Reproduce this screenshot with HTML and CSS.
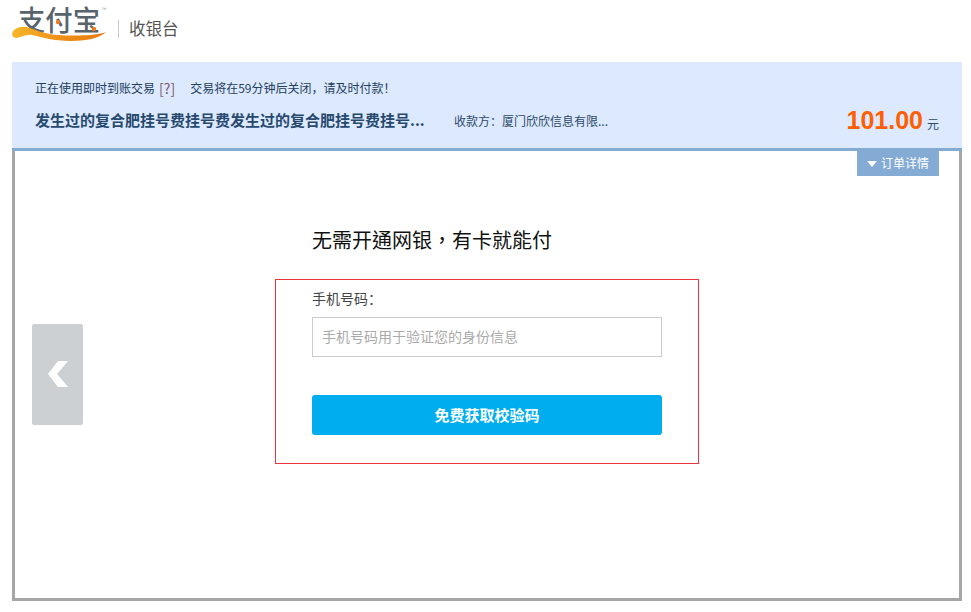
FILE: index.html
```html
<!DOCTYPE html>
<html lang="zh-CN">
<head>
<meta charset="utf-8">
<title>支付宝 收银台</title>
<link rel="stylesheet" href="styles.css">
</head>
<body>
<header class="top">
  <svg class="logo" width="98" height="36" viewBox="0 0 98 36" aria-label="支付宝">
    <defs>
      <linearGradient id="swoosh" x1="0" x2="1" y1="0" y2="0">
        <stop offset="0" stop-color="#f6b62a"/>
        <stop offset="0.45" stop-color="#f0941a"/>
        <stop offset="1" stop-color="#e9770c"/>
      </linearGradient>
    </defs>
    <text class="logo-text" x="7" y="26" textLength="82" lengthAdjust="spacingAndGlyphs">支付宝</text>
    <text class="logo-tm" x="90.500" y="6">™</text>
    <path class="logo-swoosh" fill="url(#swoosh)" d="M1 29C2 24 8 21 15 22C25 24 31 29 47 30C63 31 84 31 95 27C90 32 78 36 60 36C42 36 30 32 21 30C16 28.500 10 32 5 33C3 33 1 31 1 29Z"/>
    <circle class="logo-dot" cx="47" cy="17" r="2.200"/>
    <circle class="logo-dot" cx="83" cy="24" r="2.200"/>
  </svg>
  <span class="divider"></span>
  <span class="cashier">收银台</span>
</header>
<section class="banner">
  <div class="notice">
    <span>正在使用即时到账交易</span><span class="help">[?]</span><span class="timer">交易将在59分钟后关闭，请及时付款！</span>
  </div>
  <div class="order">
    <strong class="subject">发生过的复合肥挂号费挂号费发生过的复合肥挂号费挂号...</strong>
    <span class="payee">收款方：厦门欣欣信息有限...</span>
    <span class="amount"><b>101.00</b><i>元</i></span>
  </div>
</section>
<main class="panel">
  <a class="details"><span class="caret"></span>订单详情</a>
  <a class="back">
    <svg width="22" height="28" viewBox="0 0 22 28"><path d="M11 1H21L10 14L21 27H11L1 14Z" fill="#fff"/></svg>
  </a>
  <h1 class="heading" lang="zh-Hant">无需开通网银，有卡就能付</h1>
  <form class="form-box">
    <label class="label" for="phone">手机号码：</label>
    <input class="input" id="phone" placeholder="手机号码用于验证您的身份信息">
    <button class="submit" type="button">免费获取校验码</button>
  </form>
</main>
</body>
</html>
```
FILE: styles.css
```css
* { box-sizing: border-box; }
html, body { margin: 0; padding: 0; background: #fff; }
body {
  width: 971px;
  height: 612px;
  overflow: hidden;
  font-family: "Noto Sans CJK SC", "Liberation Sans", sans-serif;
}
.top {
  height: 62px;
  display: flex;
  align-items: flex-start;
  padding: 5px 0 0 11px;
}
.logo { flex: none; overflow: visible; }
.logo-text { font-size: 28px; font-weight: 500; fill: #57646c; font-family: "Noto Sans CJK SC", sans-serif; }
.logo-tm { font-size: 5px; fill: #999; font-family: "Liberation Sans", sans-serif; }
.logo-dot { fill: #ef7a1a; }
.divider { width: 1px; height: 18px; background: #c8c8c8; margin: 15px 0 0 9px; }
.cashier { font-size: 16.500px; line-height: 24px; color: #555; margin: 11px 0 0 10px; }
.banner {
  width: 950px;
  height: 89px;
  margin-left: 12px;
  padding: 17px 23px 0;
  background: #dce9ff;
  border-bottom: 3px solid #84abd3;
  color: #2d4a68;
}
.notice { display: flex; font-size: 12px; line-height: 18px; color: #24405c; }
.help { margin-left: 4px; font-size: 14px; color: #7d5a62; }
.timer { margin-left: 15px; }
.order { display: flex; align-items: baseline; margin-top: 8px; height: 30px; line-height: 30px; }
.subject { width: 419px; font-size: 15px; color: #27496e; }
.payee { font-size: 12px; color: #2d4a68; }
.amount { margin-left: auto; align-self: flex-start; display: flex; align-items: baseline; }
.amount b { font-family: "Liberation Sans", sans-serif; font-size: 25px; color: #ff5f00; }
.amount i { font-style: normal; font-size: 12px; margin-left: 4px; color: #2d4a68; }
.panel {
  position: relative;
  width: 950px;
  height: 450px;
  margin-left: 12px;
  border: 3px solid #a6a6a6;
  border-top: 0;
  display: flex;
  flex-direction: column;
  align-items: flex-start;
  padding: 74px 0 0 260px;
}
.details {
  position: absolute;
  top: 0;
  right: 20px;
  width: 82px;
  height: 25px;
  background: #84abd3;
  color: #fff;
  font-size: 12px;
  line-height: 23px;
  display: flex;
  align-items: center;
  padding: 0 0 2px 10px;
}
.caret {
  width: 0;
  height: 0;
  border-left: 5px solid transparent;
  border-right: 5px solid transparent;
  border-top: 6px solid #fff;
  margin: 2px 4px 0 0;
}
.back {
  position: absolute;
  left: 17px;
  top: 173px;
  width: 51px;
  height: 101px;
  background: #cdd0d3;
  border-radius: 2px;
  display: flex;
  align-items: center;
  justify-content: center;
  padding-bottom: 2px;
}
.heading {
  margin: 0 0 0 37px;
  font-family: "Noto Sans CJK TC", "Noto Sans CJK SC", sans-serif;
  font-size: 20px;
  font-weight: 400;
  line-height: 30px;
  color: #111;
}
.form-box {
  width: 424px;
  height: 185px;
  margin-top: 24px;
  border: 1px solid #e8363c;
  padding: 6px 36px 0;
  display: flex;
  flex-direction: column;
  align-items: flex-start;
}
.label { font-size: 14px; line-height: 24px; color: #444; }
.input {
  width: 350px;
  height: 40px;
  margin-top: 7px;
  border: 1px solid #ccc;
  padding: 0 10px 2px 9px;
  font: 14px "Noto Sans CJK SC", sans-serif;
  outline: none;
}
.input::placeholder { color: #aaa; opacity: 1; }
.submit {
  width: 350px;
  height: 40px;
  margin-top: 38px;
  border: 0;
  border-radius: 3px;
  padding: 0 0 2px;
  background: #00aeef;
  color: #fff;
  font: 700 15px "Noto Sans CJK SC", sans-serif;
}
```
